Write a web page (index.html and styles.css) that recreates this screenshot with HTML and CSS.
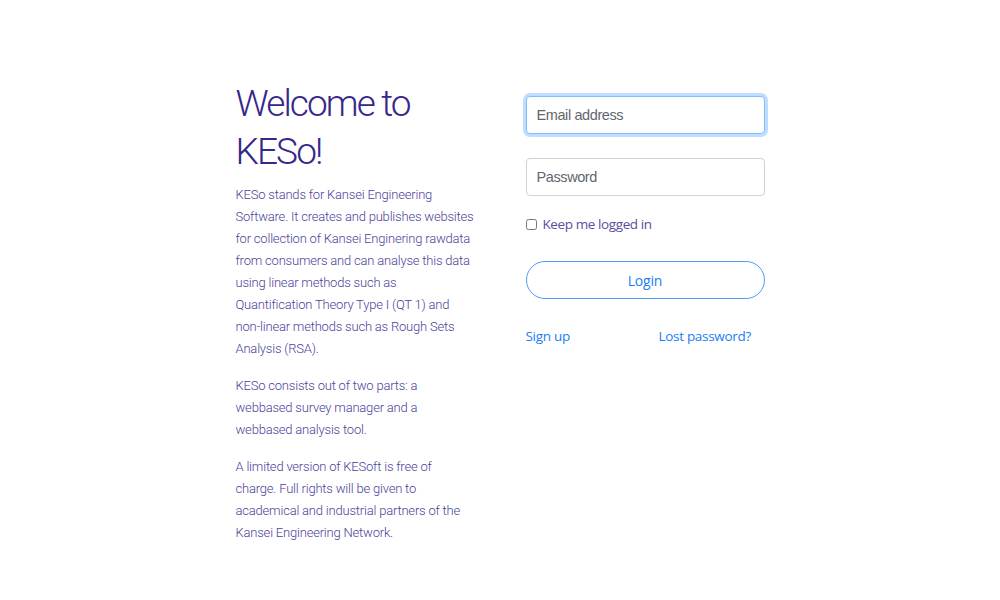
FILE: index.html
```html
<!DOCTYPE html>
<html lang="en">
<head>
<meta charset="utf-8">
<title>KESo</title>
<link rel="stylesheet" href="styles.css">
</head>
<body>
<main class="page">
  <section class="intro">
    <h1 class="title">Welcome to KESo!</h1>
    <p class="text">KESo stands for Kansei Engineering Software. It creates and publishes websites for collection of Kansei Enginering rawdata from consumers and can analyse this data using linear methods such as Quantification Theory Type I (QT 1) and non-linear methods such as Rough Sets Analysis (RSA).</p>
    <p class="text">KESo consists out of two parts: a webbased survey manager and a webbased analysis tool.</p>
    <p class="text">A limited version of KESoft is free of charge. Full rights will be given to academical and industrial partners of the Kansei Engineering Network.</p>
  </section>
  <form class="login">
    <input class="field field-focus" type="email" placeholder="Email address">
    <input class="field" type="password" placeholder="Password">
    <label class="remember"><input class="check" type="checkbox"><span>Keep me logged in</span></label>
    <button class="btn" type="button">Login</button>
    <div class="links">
      <a class="link" href="#">Sign up</a>
      <a class="link link-center" href="#">Lost password?</a>
    </div>
  </form>
</main>
</body>
</html>
```

FILE: styles.css
```css
html, body {
  margin: 0;
  padding: 0;
  background: #ffffff;
}

.page {
  width: 529px;
  margin: 0 auto;
  padding-top: 80px;
  display: flex;
  justify-content: space-between;
  align-items: flex-start;
}

.intro {
  width: 239px;
  font-family: Roboto, "Liberation Sans", sans-serif;
  font-weight: 300;
  color: #3a2b8e;
}

.title {
  margin: 0 0 8px 0;
  font-size: 37px;
  line-height: 48px;
  font-weight: 300;
  letter-spacing: -1.9px;
  color: #35278c;
}

.text {
  margin: 0 0 15px 0;
  font-size: 13px;
  line-height: 22px;
  letter-spacing: -0.2px;
  color: #4b3f9a;
}

.login {
  width: 239px;
  padding-top: 16px;
  display: flex;
  flex-direction: column;
}

.field {
  box-sizing: border-box;
  width: 100%;
  height: 38px;
  margin: 0 0 24px 0;
  padding: 6px 10px;
  border: 1px solid #ced4da;
  border-radius: 4px;
  font-family: "Liberation Sans", Arial, sans-serif;
  font-size: 14.5px;
  letter-spacing: -0.4px;
  color: #495057;
  background: #fff;
  outline: none;
}

.field::placeholder {
  color: #5f666d;
}

.field-focus {
  border-color: #80bdff;
  box-shadow: 0 0 0 3px rgba(0, 123, 255, 0.25);
}

.remember {
  display: flex;
  align-items: center;
  gap: 6px;
  margin: -5px 0 0 0;
  font-family: "Open Sans", "Noto Sans", sans-serif;
  font-size: 13.5px;
  letter-spacing: -0.4px;
  color: #5a4e9e;
}

.check {
  margin: 0;
  width: 11px;
  height: 11px;
}

.btn {
  box-sizing: border-box;
  width: 100%;
  height: 38px;
  margin-top: 28px;
  border: 1px solid #4d9bf7;
  border-radius: 19px;
  background: #fff;
  color: #1a7ef5;
  font-family: "Open Sans", "Noto Sans", sans-serif;
  font-size: 14px;
  letter-spacing: -0.2px;
}

.links {
  display: grid;
  grid-template-columns: 1fr 1fr;
  margin-top: 28px;
  font-family: "Open Sans", "Noto Sans", sans-serif;
  font-size: 13.5px;
  letter-spacing: -0.3px;
}

.link {
  color: #1a7ef5;
  text-decoration: none;
}

.link-center {
  text-align: center;
}
```
